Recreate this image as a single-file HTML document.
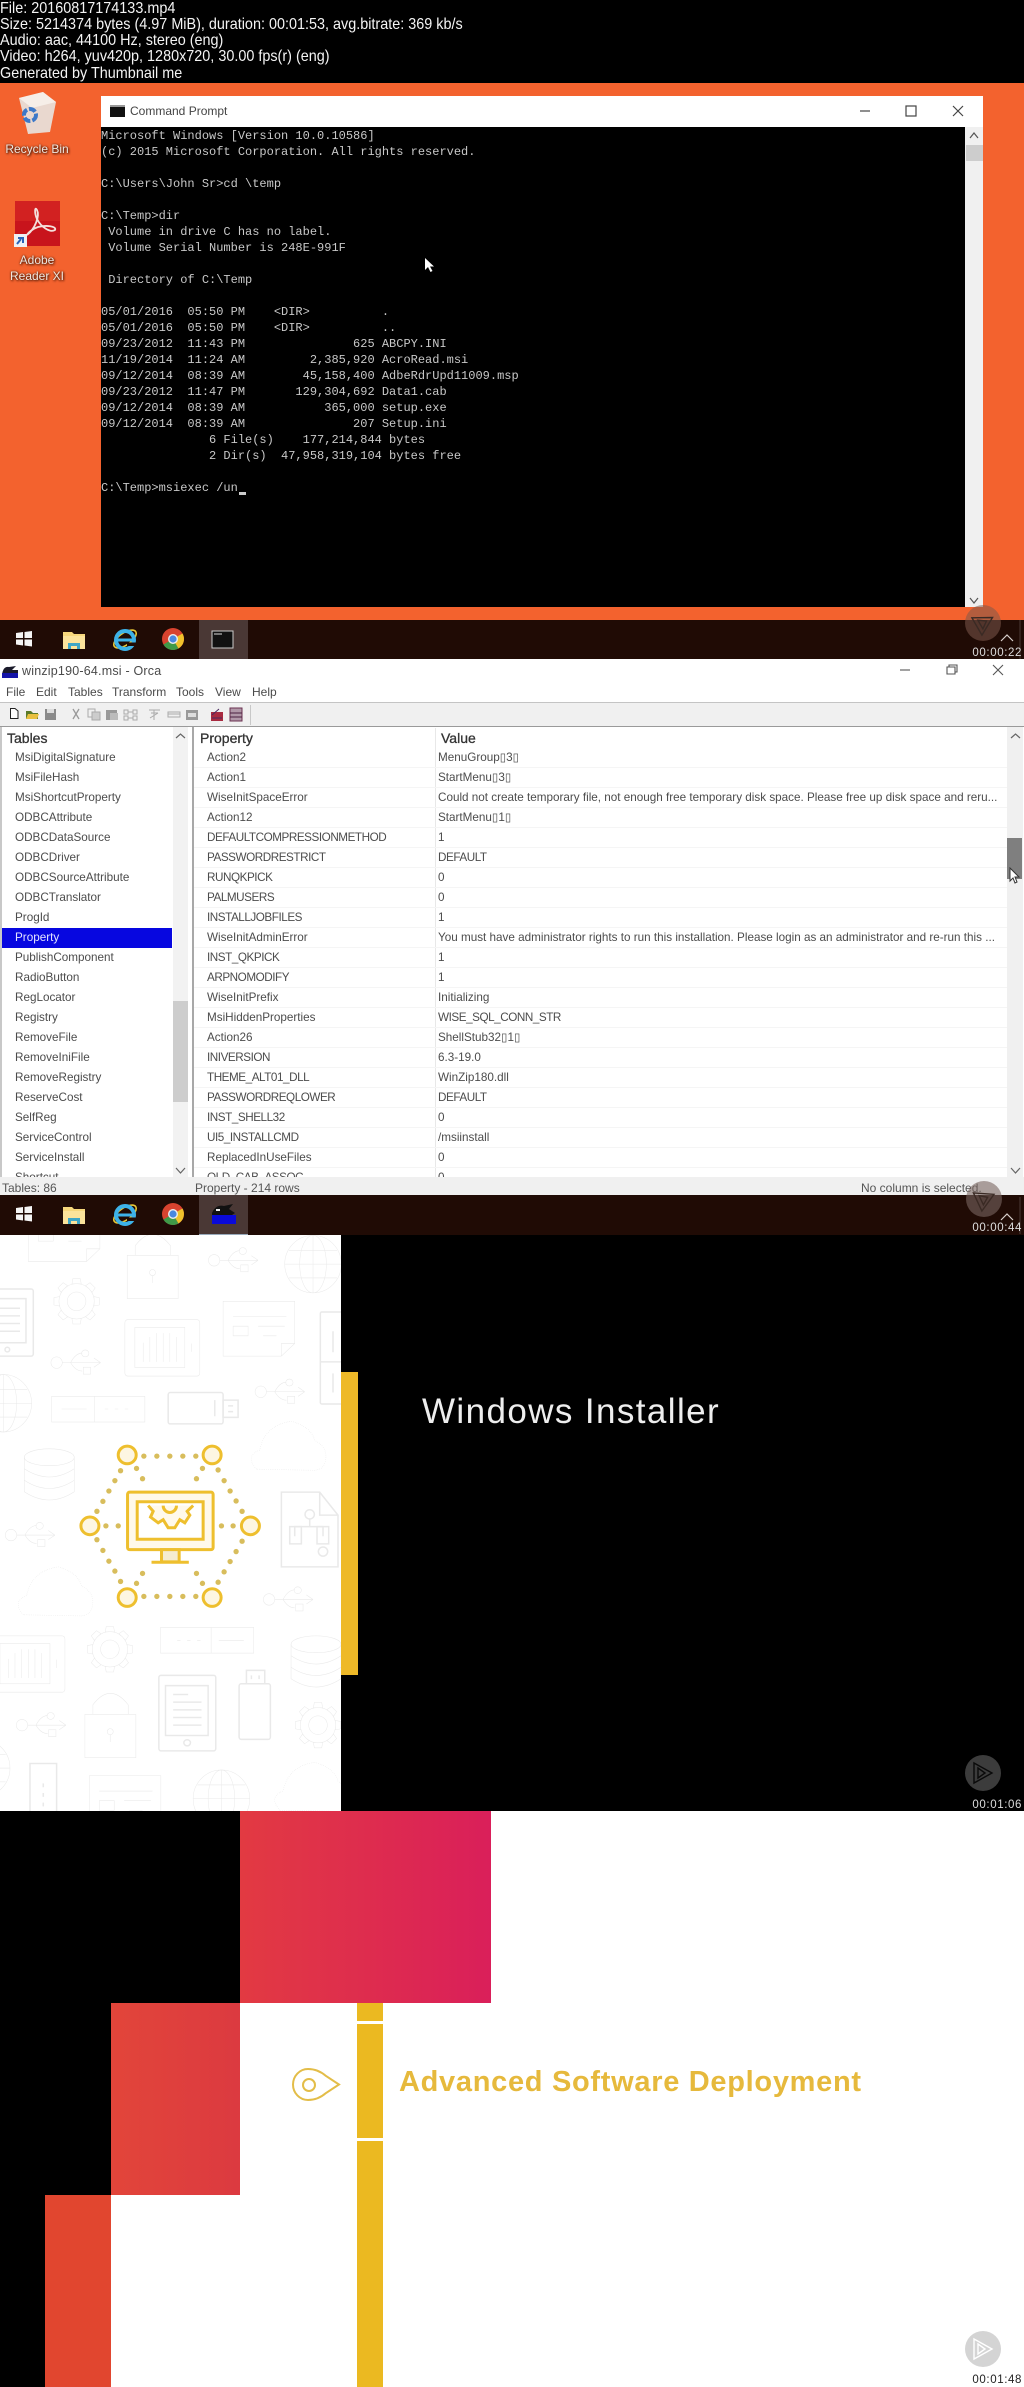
<!DOCTYPE html>
<html><head><meta charset="utf-8"><title>Thumbnail sheet</title>
<style>
html,body{margin:0;padding:0;background:#000}
#p{position:relative;width:1024px;height:2387px;overflow:hidden;background:#000;font-family:"Liberation Sans",sans-serif}
#p div,#p svg,#p span.a{position:absolute}
.hd{left:0;color:#f4f4f4;font-size:16px;line-height:16px;white-space:pre;transform:scaleX(.9);transform-origin:0 0}
.con{left:101px;top:128px;color:#c8c8c8;font:12px/16px "Liberation Mono",monospace;white-space:pre}
.tb{left:0;width:1024px;height:40px;background:#200b05}
.tile{left:199px;width:49px;height:39px;background:#4a3835;border-bottom:1px solid #9ab}
.ts{right:2px;font-size:11.5px;line-height:12px;letter-spacing:.6px;white-space:pre}
.lst{font-size:11.7px;line-height:20px;color:#4c4c4c;white-space:nowrap;overflow:hidden}
.row{height:20px;box-shadow:inset 0 -1px 0 #f5f5f5}
.c{letter-spacing:-.45px}
.m{top:685px;font-size:12px;line-height:14px;color:#4a4a4a}
.st{top:1181px;font-size:12px;line-height:14px;color:#555;white-space:pre}
.hh{top:730px;font-size:14px;line-height:16px;color:#333;-webkit-text-stroke:.3px #333}
.lbl{color:#f0e6df;font-size:12px;line-height:16px;text-align:center;text-shadow:1px 1px 2px #3a1204,0 0 2px #5a2208;width:74px;left:0}
.pat *{vector-effect:non-scaling-stroke}
.pat{stroke-width:1.5}
</style></head><body><div id="p">

<svg width="0" height="0" style="left:0;top:0">
<defs>
<g id="logo"><path d="M-7 -10L11 0L-7 10Z M-3 -5L4 0L-3 5Z" fill="none" stroke-width="1.4"/></g>
<g id="win"><path d="M0 2L7 1V7H0ZM8.500 1L16 0V7H8.500ZM0 8.500H7V14.500L0 13.500ZM8.500 8.500H16V15.500L8.500 14.500Z" fill="#f5f5f5"/></g>
<g id="folder"><path d="M0 1H9L11 3H22V18H0Z" fill="#f6d77c"/><rect x="0" y="5" width="22" height="13" fill="#fbe39b"/><path d="M5 18V12H17V18H14V15H8V18Z" fill="#3ea6c6"/></g>
<g id="ie"><ellipse cx="12" cy="11" rx="13" ry="6" fill="none" stroke="#e8c838" stroke-width="1.6" transform="rotate(-35 12 11)"/><circle cx="12" cy="12" r="9" fill="none" stroke="#3db2e8" stroke-width="4"/><rect x="5" y="10.500" width="14" height="3" fill="#3db2e8"/><path d="M14 14.500H23V18H14Z" fill="#200b05"/></g>
<g id="chrome"><circle r="11" fill="#d8432f"/><path d="M0 0L-9.600 5.500A11 11 0 0 0 5.500 9.500Z" fill="#3f9a48"/><path d="M0 0L9.500 -5.500A11 11 0 0 1 5.500 9.500Z" fill="#f0c22c"/><circle r="5" fill="#eee"/><circle r="3.600" fill="#4a88e0"/></g>
<g id="chev"><path d="M-6 3L0 -3L6 3" fill="none" stroke="#d8d0cc" stroke-width="1.2"/></g>
<g id="usb" fill="none" stroke="#e9e9e9"><ellipse cx="18" cy="0" rx="17" ry="15"/><path d="M35 0H150M150 0L130 -12M150 0L130 12M60 0Q75 -25 95 -25M60 0Q75 22 95 22"/><ellipse cx="104" cy="-24" rx="11" ry="9"/><rect x="98" y="12" width="22" height="18"/></g>
<g id="tooth"><path d="M-14 -52L-11 -68H11L14 -52Z" fill="#fff" stroke="#e9e9e9"/></g>
<g id="gear" stroke="#e9e9e9"><g transform="scale(1,.87)">
<use href="#tooth"/><use href="#tooth" transform="rotate(45)"/><use href="#tooth" transform="rotate(90)"/><use href="#tooth" transform="rotate(135)"/><use href="#tooth" transform="rotate(180)"/><use href="#tooth" transform="rotate(225)"/><use href="#tooth" transform="rotate(270)"/><use href="#tooth" transform="rotate(315)"/>
<circle r="53" fill="#fff"/><circle r="28" fill="none"/></g></g>
<g id="db" fill="none" stroke="#e9e9e9"><ellipse cx="76" cy="22" rx="75" ry="22"/><path d="M1 22V112Q76 155 151 112V22M1 52Q76 95 151 52M1 82Q76 125 151 82"/></g>
<g id="lock" fill="none" stroke="#e9e9e9"><rect x="0" y="70" width="153" height="113"/><path d="M24 70V45Q76 -15 130 45V70"/><ellipse cx="76" cy="115" rx="9" ry="8"/><path d="M76 122V142"/></g>
<g id="tabb" fill="none" stroke="#e9e9e9"><rect x="0" y="0" width="225" height="147" rx="8"/><rect x="30" y="20" width="150" height="105"/><path d="M55 60V110M75 45V110M95 35V110M115 35V110M135 35V110M155 45V110M200 62V84"/></g>
<g id="glob" fill="none" stroke="#e9e9e9"><ellipse rx="85" ry="75"/><ellipse rx="40" ry="75"/><path d="M-85 0H85M-72 -36H72M-72 36H72M0 -75V75"/></g>
<g id="bar" fill="none" stroke="#e9e9e9"><rect width="280" height="67"/><path d="M128 0V67M30 33H105M160 33H170M190 33H200M220 33H230"/></g>
<g id="note" fill="none" stroke="#e9e9e9"><path d="M0 0H215V110L175 143H0ZM175 143V110H215M30 40H190M30 65H75V90H30ZM105 65H185M120 90H160"/></g>
<g id="cloud" fill="none" stroke="#dedede" stroke-dasharray="1.500 4"><path d="M20 125Q-15 90 30 75Q45 10 125 0Q185 15 195 50Q240 70 225 110Q220 125 195 128Z"/></g>
</defs>
</svg>

<!-- header -->
<div class="hd" style="top:1px">File: 20160817174133.mp4</div>
<div class="hd" style="top:17px">Size: 5214374 bytes (4.97 MiB), duration: 00:01:53, avg.bitrate: 369 kb/s</div>
<div class="hd" style="top:33px">Audio: aac, 44100 Hz, stereo (eng)</div>
<div class="hd" style="top:49px">Video: h264, yuv420p, 1280x720, 30.00 fps(r) (eng)</div>
<div class="hd" style="top:66px">Generated by Thumbnail me</div>

<!-- PANEL 1 -->
<div style="left:0;top:83px;width:1024px;height:537px;background:#f3622e"></div>
<svg style="left:0;top:84px" width="100" height="180">
<path d="M19 14L43 8L56 18L50 48L28 50Z" fill="#e9d8cf"/><path d="M19 14L43 8L56 18L32 24Z" fill="#f6eee8"/>
<circle cx="30" cy="31" r="6" fill="none" stroke="#3c78c8" stroke-width="4" stroke-dasharray="7 2"/>
<rect x="15" y="117" width="45" height="45" fill="#c8141c"/><rect x="15" y="117" width="45" height="20" fill="#d92a25" opacity=".6"/>
<path d="M27 151C35 145 40 132 37 126C35 122 34 128 37 135C41 143 50 149 55 146C57 142 46 141 38 143C32 145 28 149 27 151Z" fill="none" stroke="#f4e0dc" stroke-width="1.8"/>
<rect x="14" y="150" width="13" height="13" fill="#eef0f4"/><path d="M17 160L21 155M18 154H23V159" fill="none" stroke="#2a63b8" stroke-width="2"/>
</svg>
<div class="lbl" style="top:141px">Recycle Bin</div>
<div class="lbl" style="top:252px">Adobe</div>
<div class="lbl" style="top:268px">Reader XI</div>

<div style="left:101px;top:96px;width:882px;height:31px;background:#fff"></div>
<div style="left:110px;top:105px;width:15px;height:12px;background:#111;border-top:2px solid #999;box-sizing:border-box"></div>
<div style="left:130px;top:104px;font-size:12px;line-height:14px;color:#444">Command Prompt</div>
<svg style="left:855px;top:100px" width="120" height="22" fill="none" stroke="#444" stroke-width="1.2">
<path d="M5 11H15"/><rect x="51" y="6" width="10" height="10"/><path d="M98 6L108 16M108 6L98 16"/></svg>
<div style="left:101px;top:127px;width:864px;height:480px;background:#000"></div>
<div class="con">Microsoft Windows [Version 10.0.10586]
(c) 2015 Microsoft Corporation. All rights reserved.

C:\Users\John Sr&gt;cd \temp

C:\Temp&gt;dir
 Volume in drive C has no label.
 Volume Serial Number is 248E-991F

 Directory of C:\Temp

05/01/2016  05:50 PM    &lt;DIR&gt;          .
05/01/2016  05:50 PM    &lt;DIR&gt;          ..
09/23/2012  11:43 PM               625 ABCPY.INI
11/19/2014  11:24 AM         2,385,920 AcroRead.msi
09/12/2014  08:39 AM        45,158,400 AdbeRdrUpd11009.msp
09/23/2012  11:47 PM       129,304,692 Data1.cab
09/12/2014  08:39 AM           365,000 setup.exe
09/12/2014  08:39 AM               207 Setup.ini
               6 File(s)    177,214,844 bytes
               2 Dir(s)  47,958,319,104 bytes free

C:\Temp&gt;msiexec /un</div>
<div style="left:239px;top:492px;width:7px;height:3px;background:#ccc"></div>
<div style="left:965px;top:127px;width:18px;height:480px;background:#f0f0f0"></div>
<div style="left:966px;top:145px;width:17px;height:16px;background:#cdcdcd"></div>
<svg style="left:965px;top:127px" width="18" height="480" fill="none" stroke="#555" stroke-width="1.2"><path d="M5 11L9 6L13 11M5 471L9 476L13 471"/></svg>
<svg style="left:424px;top:257px" width="12" height="16"><path d="M1 1V13L4 10L6.500 15L8.500 14L6 9.500H10Z" fill="#fff"/></svg>

<!-- taskbar 1 -->
<div class="tb" style="top:620px"></div>
<div class="tile" style="top:620px"></div>
<svg style="left:0;top:620px" width="260" height="40">
<use href="#win" x="16" y="11"/><use href="#folder" x="63" y="11"/><use href="#ie" x="113" y="8"/><use href="#chrome" x="173" y="19"/>
<rect x="212" y="11" width="21" height="17" fill="#111" stroke="#ccc" stroke-width="1"/><path d="M214 14H222" stroke="#ddd"/>
</svg>
<svg style="left:944px;top:600px" width="80" height="60">
<circle cx="39" cy="23" r="18" fill="#7d5a4c" fill-opacity=".55"/><use href="#logo" x="39" y="23" stroke="#3a2a24" transform="rotate(-30 39 23)"/>
<use href="#chev" x="63" y="38"/><path d="M76 20V59" stroke="#4a3835"/>
</svg>
<div class="ts" style="top:647px;color:#ddd">00:00:22</div>

<!-- PANEL 2 -->
<div style="left:0;top:659px;width:1024px;height:536px;background:#fff"></div>
<svg style="left:1px;top:663px" width="18" height="16"><path d="M1 12Q2 3 8 4L15 3L11 7H17V11L3 11Z" fill="#1a1a2a"/><rect x="1" y="10" width="16" height="5" fill="#1414a8"/></svg>
<div style="left:22px;top:664px;font-size:12.500px;line-height:14px;color:#4a4a4a;letter-spacing:.2px;white-space:pre">winzip190-64.msi - Orca</div>
<svg style="left:895px;top:660px" width="120" height="20" fill="none" stroke="#555" stroke-width="1.100">
<path d="M5 10H15"/><path d="M52 7H60V14H52ZM54 7V5H62V12H60"/><path d="M98 5L108 15M108 5L98 15"/></svg>
<div class="m" style="left:6px">File</div><div class="m" style="left:36px">Edit</div><div class="m" style="left:68px">Tables</div><div class="m" style="left:112px">Transform</div><div class="m" style="left:176px">Tools</div><div class="m" style="left:215px">View</div><div class="m" style="left:252px">Help</div>
<div style="left:0;top:702px;width:1024px;height:25px;background:#f0f0f0;border-top:1px solid #c4c4c4;border-bottom:1px solid #9a9a9a;box-sizing:border-box"></div>
<svg style="left:0;top:703px" width="256" height="24">
<path d="M10.500 5.500H15L18 8V15.500H10.500Z" fill="#fff" stroke="#222"/>
<path d="M26 8H31L33 10H38V16H26Z" fill="#5a7a2a"/><path d="M28 11H39L37 16H26Z" fill="#e8c040"/>
<rect x="45" y="6" width="11" height="11" fill="#8a8a8a"/><rect x="47" y="6" width="7" height="4" fill="#ddd"/>
<path d="M73 6L79 16M79 6L73 16" stroke="#999" stroke-width="1.300" fill="none"/>
<rect x="88" y="6" width="7" height="8" fill="none" stroke="#aaa"/><rect x="92" y="9" width="8" height="8" fill="#ccc" stroke="#aaa"/>
<rect x="106" y="7" width="11" height="10" fill="#999"/><rect x="110" y="10" width="8" height="7" fill="#bbb"/>
<g stroke="#aaa" fill="none"><rect x="124" y="7" width="4" height="4"/><rect x="133" y="7" width="4" height="4"/><rect x="124" y="13" width="4" height="4"/><rect x="133" y="13" width="4" height="4"/><path d="M128 9H133M128 15H133"/>
<path d="M149 7H160M151 10H158M154 7V17M150 15L158 10"/><rect x="168" y="9" width="12" height="5"/><path d="M168 11H180"/></g>
<rect x="186" y="7" width="12" height="10" fill="#999"/><rect x="188" y="10" width="8" height="4" fill="#ddd"/>
<rect x="211" y="9" width="12" height="9" fill="#a82a40"/><path d="M212 12L219 6M212 15H222" stroke="#4a2a60"/>
<rect x="230" y="5" width="12" height="13" fill="#b098a8" stroke="#6a3050"/><path d="M230 10H242M230 14H242" stroke="#4a2040"/>
<path d="M250.500 2V22" stroke="#c8c8c8"/>
</svg>

<!-- left list -->
<div class="hh" style="left:7px;top:730px">Tables</div>
<div class="lst" style="left:2px;top:748px;width:170px;height:429px">
<div style="position:static;padding-left:13px;height:20px">MsiDigitalSignature</div>
<div style="position:static;padding-left:13px;height:20px">MsiFileHash</div>
<div style="position:static;padding-left:13px;height:20px">MsiShortcutProperty</div>
<div style="position:static;padding-left:13px;height:20px">ODBCAttribute</div>
<div style="position:static;padding-left:13px;height:20px">ODBCDataSource</div>
<div style="position:static;padding-left:13px;height:20px">ODBCDriver</div>
<div style="position:static;padding-left:13px;height:20px">ODBCSourceAttribute</div>
<div style="position:static;padding-left:13px;height:20px">ODBCTranslator</div>
<div style="position:static;padding-left:13px;height:20px">ProgId</div>
<div style="position:static;padding-left:13px;height:20px;background:#0707e0;color:#e4e4ff">Property</div>
<div style="position:static;padding-left:13px;height:20px">PublishComponent</div>
<div style="position:static;padding-left:13px;height:20px">RadioButton</div>
<div style="position:static;padding-left:13px;height:20px">RegLocator</div>
<div style="position:static;padding-left:13px;height:20px">Registry</div>
<div style="position:static;padding-left:13px;height:20px">RemoveFile</div>
<div style="position:static;padding-left:13px;height:20px">RemoveIniFile</div>
<div style="position:static;padding-left:13px;height:20px">RemoveRegistry</div>
<div style="position:static;padding-left:13px;height:20px">ReserveCost</div>
<div style="position:static;padding-left:13px;height:20px">SelfReg</div>
<div style="position:static;padding-left:13px;height:20px">ServiceControl</div>
<div style="position:static;padding-left:13px;height:20px">ServiceInstall</div>
<div style="position:static;padding-left:13px;height:20px">Shortcut</div>
</div>
<div style="left:0;top:727px;width:2px;height:450px;background:#c8c8c8"></div>
<div style="left:173px;top:727px;width:15px;height:450px;background:#f2f2f2"></div>
<div style="left:173px;top:1001px;width:15px;height:101px;background:#cdcdcd"></div>
<svg style="left:173px;top:727px" width="15" height="450" fill="none" stroke="#666" stroke-width="1.200"><path d="M3 11L7.500 7L12 11M3 441L7.500 446L12 441"/></svg>
<div style="left:192px;top:727px;width:2px;height:450px;background:#a8a8a8"></div>

<!-- right list -->
<div class="hh" style="left:200px">Property</div>
<div class="hh" style="left:441px">Value</div>
<div style="left:434.500px;top:728px;width:1px;height:449px;background:#e8e8e8"></div>
<div class="lst" style="left:194px;top:748px;width:813px;height:429px">
<div class="row" style="position:relative"><span class="a" style="left:13px">Action2</span><span class="a" style="left:244px">MenuGroup▯3▯</span></div>
<div class="row" style="position:relative"><span class="a" style="left:13px">Action1</span><span class="a" style="left:244px">StartMenu▯3▯</span></div>
<div class="row" style="position:relative"><span class="a" style="left:13px">WiseInitSpaceError</span><span class="a" style="left:244px">Could not create temporary file, not enough free temporary disk space. Please free up disk space and reru...</span></div>
<div class="row" style="position:relative"><span class="a" style="left:13px">Action12</span><span class="a" style="left:244px">StartMenu▯1▯</span></div>
<div class="row" style="position:relative"><span class="a c" style="left:13px">DEFAULTCOMPRESSIONMETHOD</span><span class="a" style="left:244px">1</span></div>
<div class="row" style="position:relative"><span class="a c" style="left:13px">PASSWORDRESTRICT</span><span class="a c" style="left:244px">DEFAULT</span></div>
<div class="row" style="position:relative"><span class="a c" style="left:13px">RUNQKPICK</span><span class="a" style="left:244px">0</span></div>
<div class="row" style="position:relative"><span class="a c" style="left:13px">PALMUSERS</span><span class="a" style="left:244px">0</span></div>
<div class="row" style="position:relative"><span class="a c" style="left:13px">INSTALLJOBFILES</span><span class="a" style="left:244px">1</span></div>
<div class="row" style="position:relative"><span class="a" style="left:13px">WiseInitAdminError</span><span class="a" style="left:244px">You must have administrator rights to run this installation. Please login as an administrator and re-run this ...</span></div>
<div class="row" style="position:relative"><span class="a c" style="left:13px">INST_QKPICK</span><span class="a" style="left:244px">1</span></div>
<div class="row" style="position:relative"><span class="a c" style="left:13px">ARPNOMODIFY</span><span class="a" style="left:244px">1</span></div>
<div class="row" style="position:relative"><span class="a" style="left:13px">WiseInitPrefix</span><span class="a" style="left:244px">Initializing</span></div>
<div class="row" style="position:relative"><span class="a" style="left:13px">MsiHiddenProperties</span><span class="a c" style="left:244px">WISE_SQL_CONN_STR</span></div>
<div class="row" style="position:relative"><span class="a" style="left:13px">Action26</span><span class="a" style="left:244px">ShellStub32▯1▯</span></div>
<div class="row" style="position:relative"><span class="a c" style="left:13px">INIVERSION</span><span class="a" style="left:244px">6.3-19.0</span></div>
<div class="row" style="position:relative"><span class="a c" style="left:13px">THEME_ALT01_DLL</span><span class="a" style="left:244px">WinZip180.dll</span></div>
<div class="row" style="position:relative"><span class="a c" style="left:13px">PASSWORDREQLOWER</span><span class="a c" style="left:244px">DEFAULT</span></div>
<div class="row" style="position:relative"><span class="a c" style="left:13px">INST_SHELL32</span><span class="a" style="left:244px">0</span></div>
<div class="row" style="position:relative"><span class="a c" style="left:13px">UI5_INSTALLCMD</span><span class="a" style="left:244px">/msiinstall</span></div>
<div class="row" style="position:relative"><span class="a" style="left:13px">ReplacedInUseFiles</span><span class="a" style="left:244px">0</span></div>
<div class="row" style="position:relative"><span class="a c" style="left:13px">OLD_CAB_ASSOC</span><span class="a" style="left:244px">0</span></div>
</div>
<div style="left:1007px;top:727px;width:16px;height:450px;background:#f0f0f0"></div>
<div style="left:1007px;top:838px;width:15px;height:41px;background:#7f7f7f"></div>
<svg style="left:1007px;top:727px" width="16" height="450" fill="none" stroke="#666" stroke-width="1.200"><path d="M4 11L8.500 7L13 11M4 441L8.500 446L13 441"/></svg>
<svg style="left:1008px;top:867px" width="14" height="18"><path d="M2 1V14L5 11L7 16L9 15L7 10H11Z" fill="#fff" stroke="#333"/></svg>

<div style="left:0;top:1177px;width:1024px;height:18px;background:#f0f0f0"></div>
<div class="st" style="left:2px">Tables: 86</div>
<div class="st" style="left:195px">Property - 214 rows</div>
<div class="st" style="left:861px">No column is selected.</div>

<!-- taskbar 2 -->
<div class="tb" style="top:1195px"></div>
<div class="tile" style="top:1195px"></div>
<svg style="left:0;top:1195px" width="260" height="40">
<use href="#win" x="16" y="11"/><use href="#folder" x="63" y="11"/><use href="#ie" x="113" y="8"/><use href="#chrome" x="173" y="19"/>
<path d="M212 18Q216 9 224 11L233 9L229 14L235 18L232 20H212Z" fill="#111"/><rect x="212" y="20" width="24" height="9" fill="#0a0ad8"/><path d="M216 15H220" stroke="#eee" stroke-width="2"/>
</svg>
<svg style="left:944px;top:1175px" width="80" height="60">
<circle cx="40" cy="24" r="18" fill="#7a6660" fill-opacity=".6"/><use href="#logo" x="40" y="24" stroke="#3a2a24" transform="rotate(-25 40 24)"/>
<use href="#chev" x="63" y="42"/><path d="M76 22V59" stroke="#4a3835"/>
</svg>
<div class="ts" style="top:1222px;color:#ddd">00:00:44</div>

<!-- PANEL 3 -->
<div style="left:0;top:1235px;width:1024px;height:576px;background:#000"></div>
<div style="left:0;top:1235px;width:341px;height:576px;background:#fff"></div>
<svg class="pat" style="left:0;top:1235px" width="341" height="576" viewBox="0 39 1024 1503" preserveAspectRatio="none">
<use href="#note" x="85" y="-35"/>
<use href="#lock" x="382" y="22"/>
<use href="#usb" x="625" y="105"/>
<use href="#glob" x="940" y="115"/>
<g fill="none" stroke="#e9e9e9"><rect x="-20" y="180" width="120" height="175" rx="6"/><rect x="-20" y="205" width="98" height="115"/><path d="M-10 230H60M-10 250H60M-10 270H60M-10 290H60"/><ellipse cx="22" cy="338" rx="7" ry="6"/></g>
<use href="#gear" x="230" y="212"/>
<use href="#note" x="670" y="212"/>
<use href="#tabb" x="375" y="260"/>
<g fill="none" stroke="#e9e9e9"><rect x="962" y="240" width="80" height="240" rx="4"/><path d="M962 370H1024M1000 290V345M1000 400V450"/></g>
<use href="#usb" x="152" y="372"/>
<use href="#glob" x="10" y="478"/>
<use href="#bar" x="155" y="460"/>
<g fill="none" stroke="#e9e9e9"><rect x="505" y="450" width="165" height="82" rx="6"/><rect x="670" y="470" width="45" height="45"/><path d="M645 470V512M685 485H700M685 500H700"/></g>
<use href="#usb" x="765" y="448"/>
<use href="#cloud" x="750" y="525"/>
<use href="#db" x="72" y="597"/>
<use href="#usb" x="15" y="822"/>
<g fill="none" stroke="#e9e9e9"><path d="M845 710H960L1015 770V905H845ZM960 710V770H1015"/><ellipse cx="930" cy="768" rx="14" ry="12"/><path d="M930 780V800H885V825M930 800H970V825"/><rect x="870" y="800" width="35" height="45"/><rect x="952" y="800" width="35" height="45"/><ellipse cx="970" cy="865" rx="14" ry="12"/></g>
<use href="#cloud" x="50" y="905"/>
<use href="#usb" x="790" y="990"/>
<use href="#bar" x="762" y="1130" transform="rotate(180 762 1130)"/>
<use href="#tabb" x="-30" y="1085"/>
<use href="#gear" x="330" y="1120"/>
<use href="#db" x="873" y="1085"/>
<g fill="none" stroke="#e9e9e9"><rect x="477" y="1188" width="171" height="197" rx="6"/><rect x="497" y="1215" width="128" height="130"/><path d="M520 1238H565M520 1258H605M520 1278H605M520 1298H605M520 1318H605"/><ellipse cx="562" cy="1364" rx="10" ry="8"/>
<rect x="718" y="1210" width="94" height="145" rx="6"/><rect x="740" y="1175" width="55" height="35"/><path d="M755 1188V1198M778 1188V1198"/></g>
<use href="#lock" x="255" y="1220"/>
<use href="#usb" x="48" y="1318"/>
<use href="#gear" x="955" y="1318"/>
<use href="#glob" x="-55" y="1430"/>
<g fill="none" stroke="#e9e9e9"><rect x="90" y="1418" width="80" height="140"/><path d="M130 1470V1480M130 1495V1505M130 1520V1530"/></g>
<use href="#note" x="268" y="1450"/>
<use href="#glob" x="665" y="1510"/>
<use href="#cloud" x="820" y="1415"/>

<!-- central icon -->
<g fill="#d8bd5c">
<ellipse cx="432" cy="616" rx="8" ry="7"/><ellipse cx="471" cy="616" rx="8" ry="7"/><ellipse cx="510" cy="616" rx="8" ry="7"/><ellipse cx="549" cy="616" rx="8" ry="7"/><ellipse cx="588" cy="616" rx="8" ry="7"/>
<ellipse cx="432" cy="982" rx="8" ry="7"/><ellipse cx="471" cy="982" rx="8" ry="7"/><ellipse cx="510" cy="982" rx="8" ry="7"/><ellipse cx="549" cy="982" rx="8" ry="7"/><ellipse cx="588" cy="982" rx="8" ry="7"/>
<ellipse cx="362" cy="654" rx="8" ry="7"/><ellipse cx="345" cy="680" rx="8" ry="7"/><ellipse cx="327" cy="707" rx="8" ry="7"/><ellipse cx="309" cy="734" rx="8" ry="7"/><ellipse cx="291" cy="760" rx="8" ry="7"/>
<ellipse cx="291" cy="834" rx="8" ry="7"/><ellipse cx="309" cy="862" rx="8" ry="7"/><ellipse cx="327" cy="890" rx="8" ry="7"/><ellipse cx="345" cy="916" rx="8" ry="7"/><ellipse cx="362" cy="943" rx="8" ry="7"/>
<ellipse cx="655" cy="652" rx="8" ry="7"/><ellipse cx="673" cy="680" rx="8" ry="7"/><ellipse cx="691" cy="707" rx="8" ry="7"/><ellipse cx="709" cy="733" rx="8" ry="7"/><ellipse cx="727" cy="760" rx="8" ry="7"/>
<ellipse cx="727" cy="838" rx="8" ry="7"/><ellipse cx="709" cy="865" rx="8" ry="7"/><ellipse cx="691" cy="891" rx="8" ry="7"/><ellipse cx="673" cy="918" rx="8" ry="7"/><ellipse cx="655" cy="945" rx="8" ry="7"/>
<ellipse cx="410" cy="648" rx="8" ry="7"/><ellipse cx="428" cy="675" rx="8" ry="7"/><ellipse cx="608" cy="648" rx="8" ry="7"/><ellipse cx="590" cy="675" rx="8" ry="7"/>
<ellipse cx="428" cy="922" rx="8" ry="7"/><ellipse cx="410" cy="948" rx="8" ry="7"/><ellipse cx="590" cy="922" rx="8" ry="7"/><ellipse cx="608" cy="948" rx="8" ry="7"/>
<ellipse cx="318" cy="798" rx="8" ry="7"/><ellipse cx="355" cy="798" rx="8" ry="7"/><ellipse cx="665" cy="798" rx="8" ry="7"/><ellipse cx="700" cy="798" rx="8" ry="7"/>
</g>
<g fill="#fdf6e2" stroke="#eebf2e" stroke-width="3">
<ellipse cx="382" cy="613" rx="27" ry="23"/><ellipse cx="637" cy="613" rx="27" ry="23"/><ellipse cx="270" cy="798" rx="27" ry="23"/><ellipse cx="752" cy="798" rx="27" ry="23"/><ellipse cx="382" cy="985" rx="27" ry="23"/><ellipse cx="637" cy="985" rx="27" ry="23"/>
<rect x="383" y="710" width="257" height="150" rx="6" fill="#fff9ea"/><rect x="412" y="735" width="198" height="98" fill="#fff"/>
<rect x="485" y="860" width="53" height="32" fill="#f5ecd0"/>
<path d="M455 893H567" fill="none"/>
<path d="M445 745L460 760L452 775L475 790L490 782L505 803L525 803L540 782L555 790L570 770L562 760L580 745" fill="#fff9ea"/>
<path d="M490 745A20 18 0 0 0 530 745" fill="none"/>
</g>
</svg>
<div style="left:341px;top:1372px;width:17px;height:303px;background:#eeb928"></div>
<div style="left:422px;top:1392px;color:#eeeeee;font-size:35px;line-height:40px;letter-spacing:1.4px;white-space:pre">Windows Installer</div>
<svg style="left:944px;top:1750px" width="80" height="50"><circle cx="39" cy="23" r="18" fill="#3c3c3c"/><use href="#logo" x="37" y="23" stroke="#0a0a0a"/></svg>
<div class="ts" style="top:1799px;color:#ddd">00:01:06</div>

<!-- PANEL 4 -->
<div style="left:0;top:1811px;width:1024px;height:576px;background:#fff"></div>
<div style="left:0;top:1811px;width:240px;height:192px;background:#000"></div>
<div style="left:0;top:2003px;width:111px;height:192px;background:#000"></div>
<div style="left:0;top:2195px;width:45px;height:192px;background:#000"></div>
<div style="left:240px;top:1811px;width:251px;height:192px;background:linear-gradient(90deg,#e23a42,#da1f5a)"></div>
<div style="left:111px;top:2003px;width:129px;height:192px;background:linear-gradient(90deg,#e2453a,#dc3a40)"></div>
<div style="left:45px;top:2195px;width:66px;height:192px;background:#e1462f"></div>
<div style="left:357px;top:2003px;width:26px;height:384px;background:#ebb921"></div>
<div style="left:357px;top:2021px;width:26px;height:3px;background:#fff"></div>
<div style="left:357px;top:2138px;width:26px;height:3px;background:#fff"></div>
<svg style="left:290px;top:2065px" width="54" height="40" fill="none" stroke="#e3bd48" stroke-width="2">
<path d="M18 4Q28 4 36 11L49 19.500L36 28Q28 35 18 35A15 15.500 0 0 1 18 4Z"/><ellipse cx="19" cy="20" rx="6" ry="6"/></svg>
<div style="left:399px;top:2064px;color:#e6b93c;font-size:29px;line-height:36px;font-weight:bold;letter-spacing:.7px;white-space:pre">Advanced Software Deployment</div>
<svg style="left:944px;top:2320px" width="80" height="60"><circle cx="39" cy="29" r="18" fill="#d4d4d4"/><use href="#logo" x="37" y="29" stroke="#fff"/></svg>
<div class="ts" style="top:2374px;color:#222">00:01:48</div>
</div></body></html>
